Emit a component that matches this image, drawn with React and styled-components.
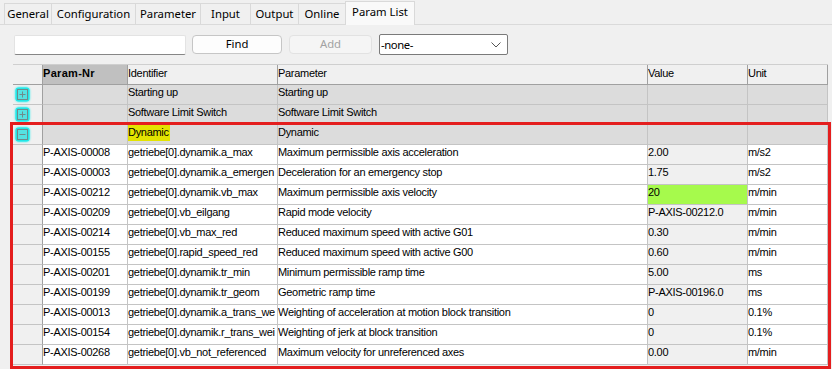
import React from 'react';
import styled, { createGlobalStyle } from 'styled-components';

const GlobalStyle = createGlobalStyle`
  html, body { margin: 0; padding: 0; background: #f0f0f0; overflow: hidden; }
  body { width: 832px; height: 369px; }
`;

const Window = styled.div`
  position: relative;
  width: 832px;
  height: 369px;
  background: #f0f0f0;
  font-family: "Noto Sans", "Open Sans", sans-serif;
  color: #000;
`;

const TabBar = styled.div`
  display: flex;
  align-items: flex-end;
  height: 25px;
  box-sizing: border-box;
  padding-left: 4px;
  border-bottom: 1px solid #dadada;
`;

const Tab = styled.div`
  box-sizing: border-box;
  width: ${p => p.$w}px;
  height: ${p => (p.$active ? 24 : 21)}px;
  margin-bottom: ${p => (p.$active ? -1 : 0)}px;
  margin-right: -1px;
  border: 1px solid #d9d9d9;
  border-bottom: none;
  background: ${p => (p.$active ? '#f9f9f9' : '#f0f0f0')};
  position: relative;
  z-index: ${p => (p.$active ? 1 : 0)};
  font-size: 11.3px;
  line-height: 19px;
  text-align: center;
  white-space: nowrap;
`;

const Panel = styled.div`
  padding: 9px 0 0 13px;
`;

const Toolbar = styled.div`
  display: flex;
  align-items: center;
  height: 21px;
`;

const SearchBox = styled.div`
  box-sizing: border-box;
  width: 172px;
  height: 20px;
  margin-left: 1px;
  background: #fff;
  border: 1px solid #e3e3e3;
  border-bottom: 1px solid #868686;
  border-radius: 2px;
`;

const Button = styled.div`
  box-sizing: border-box;
  width: ${p => p.$w}px;
  height: 19px;
  margin-left: ${p => p.$ml}px;
  border: 1px solid ${p => (p.$disabled ? '#e2e2e2' : '#c6c6c6')};
  border-radius: 4px;
  background: ${p => (p.$disabled ? '#f5f5f5' : '#fdfdfd')};
  color: ${p => (p.$disabled ? '#a2a2a2' : '#000')};
  font-size: 11.3px;
  line-height: 16px;
  text-align: center;
`;

const Select = styled.div`
  box-sizing: border-box;
  display: flex;
  align-items: center;
  justify-content: space-between;
  width: 129px;
  height: 21px;
  margin-left: 7px;
  padding: 0 6px 0 1px;
  background: #fff;
  border: 1px solid #7a7a7a;
  border-radius: 2px;
  font-size: 11.3px;
  letter-spacing: -0.4px;
`;

const Table = styled.div`
  margin-top: 9px;
  width: 815px;
  border-top: 1px solid #cfcfcf;
  font-family: "Liberation Sans", Arial, sans-serif;
  font-size: 11px;
  letter-spacing: -0.3px;
`;

const Row = styled.div`
  display: grid;
  grid-template-columns: 30px 85px 150px 370px 100px 80px;
  height: 20px;
`;

const Cell = styled.div`
  box-sizing: border-box;
  height: 20px;
  overflow: hidden;
  white-space: nowrap;
  line-height: 14px;
  padding-top: ${p => (p.$head ? 1 : 0)}px;
  background: ${p => p.$bg || '#fff'};
  border-right: 1px solid ${p => (p.$head || p.$rh ? '#a0a0a0' : '#c4c4c4')};
  border-bottom: 1px solid ${p => (p.$head ? '#a0a0a0' : '#c4c4c4')};
  font-weight: ${p => (p.$bold ? 700 : 400)};
  letter-spacing: ${p => (p.$bold ? '0.3px' : 'inherit')};
`;

const IconCell = styled(Cell)`
  display: flex;
  align-items: center;
  padding-left: 2px;
`;

const Highlight = styled.span`
  display: inline-block;
  background: #e3e300;
  padding: 1px 1px 2px 0;
  margin-top: -1px;
`;

const Annotation = styled.div`
  position: absolute;
  left: 10px;
  top: 122px;
  width: 821px;
  height: 247px;
  box-sizing: border-box;
  border: 3px solid #e41e1e;
  pointer-events: none;
`;

const ExpandIcon = ({ minus }) => (
  <svg width="15" height="15" viewBox="0 0 15 15" style={{ filter: 'drop-shadow(0 0 1px #00f0f0)' }}>
    <rect x="0.5" y="0.5" width="14" height="14" rx="3" fill="#22e6e6" />
    <rect x="2.5" y="2.5" width="10" height="10" fill="#55e2e2" stroke="#6d8c8c" />
    <line x1="4.5" y1="7.5" x2="10.5" y2="7.5" stroke="#6d8c8c" />
    {!minus && <line x1="7.5" y1="4.5" x2="7.5" y2="10.5" stroke="#6d8c8c" />}
  </svg>
);

const Chevron = () => (
  <svg width="10" height="6" viewBox="0 0 10 6">
    <polyline points="0.5,0.5 5,5 9.5,0.5" fill="none" stroke="#555" strokeWidth="1" />
  </svg>
);

const tabs = [
  ['General', 48],
  ['Configuration', 85],
  ['Parameter', 66],
  ['Input', 51],
  ['Output', 49],
  ['Online', 48],
  ['Param List', 70, true],
];

const groups = [
  { name: 'Starting up' },
  { name: 'Software Limit Switch' },
  { name: 'Dynamic', open: true },
];

const rows = [
  ['P-AXIS-00008', 'getriebe[0].dynamik.a_max', 'Maximum permissible axis acceleration', '2.00', 'm/s2'],
  ['P-AXIS-00003', 'getriebe[0].dynamik.a_emergen', 'Deceleration for an emergency stop', '1.75', 'm/s2'],
  ['P-AXIS-00212', 'getriebe[0].dynamik.vb_max', 'Maximum permissible axis velocity', '20', 'm/min', true],
  ['P-AXIS-00209', 'getriebe[0].vb_eilgang', 'Rapid mode velocity', 'P-AXIS-00212.0', 'm/min'],
  ['P-AXIS-00214', 'getriebe[0].vb_max_red', 'Reduced maximum speed with active G01', '0.30', 'm/min'],
  ['P-AXIS-00155', 'getriebe[0].rapid_speed_red', 'Reduced maximum speed with active G00', '0.60', 'm/min'],
  ['P-AXIS-00201', 'getriebe[0].dynamik.tr_min', 'Minimum permissible ramp time', '5.00', 'ms'],
  ['P-AXIS-00199', 'getriebe[0].dynamik.tr_geom', 'Geometric ramp time', 'P-AXIS-00196.0', 'ms'],
  ['P-AXIS-00013', 'getriebe[0].dynamik.a_trans_we', 'Weighting of acceleration at motion block transition', '0', '0.1%'],
  ['P-AXIS-00154', 'getriebe[0].dynamik.r_trans_wei', 'Weighting of jerk at block transition', '0', '0.1%'],
  ['P-AXIS-00268', 'getriebe[0].vb_not_referenced', 'Maximum velocity for unreferenced axes', '0.00', 'm/min'],
];

export default function App() {
  return (
    <Window>
      <GlobalStyle />
      <TabBar>
        {tabs.map(([label, w, active]) => (
          <Tab key={label} $w={w} $active={active}>{label}</Tab>
        ))}
      </TabBar>
      <Panel>
        <Toolbar>
          <SearchBox />
          <Button $w={90} $ml={6}>Find</Button>
          <Button $w={83} $ml={7} $disabled>Add</Button>
          <Select>
            <span>-none-</span>
            <Chevron />
          </Select>
        </Toolbar>
        <Table>
          <Row>
            <Cell $head $bg="#f0f0f0" />
            <Cell $head $bold $bg="#c0c0c0">Param-Nr</Cell>
            <Cell $head $bg="#f0f0f0">Identifier</Cell>
            <Cell $head $bg="#f0f0f0">Parameter</Cell>
            <Cell $head $bg="#f0f0f0">Value</Cell>
            <Cell $head $bg="#f0f0f0">Unit</Cell>
          </Row>
          {groups.map(g => (
            <Row key={g.name}>
              <IconCell $rh $bg="#f0f0f0"><ExpandIcon minus={g.open} /></IconCell>
              <Cell $bg="#dcdcdc" />
              <Cell $bg="#dcdcdc">{g.open ? <Highlight>{g.name}</Highlight> : g.name}</Cell>
              <Cell $bg="#dcdcdc">{g.name}</Cell>
              <Cell $bg="#dcdcdc" />
              <Cell $bg="#dcdcdc" />
            </Row>
          ))}
          {rows.map(([nr, id, param, value, unit, changed]) => (
            <Row key={nr}>
              <Cell $rh $bg="#f0f0f0" />
              <Cell>{nr}</Cell>
              <Cell>{id}</Cell>
              <Cell>{param}</Cell>
              <Cell $bg={changed ? '#a6fa4c' : '#f0f0f0'}>{value}</Cell>
              <Cell>{unit}</Cell>
            </Row>
          ))}
        </Table>
      </Panel>
      <Annotation />
    </Window>
  );
}
